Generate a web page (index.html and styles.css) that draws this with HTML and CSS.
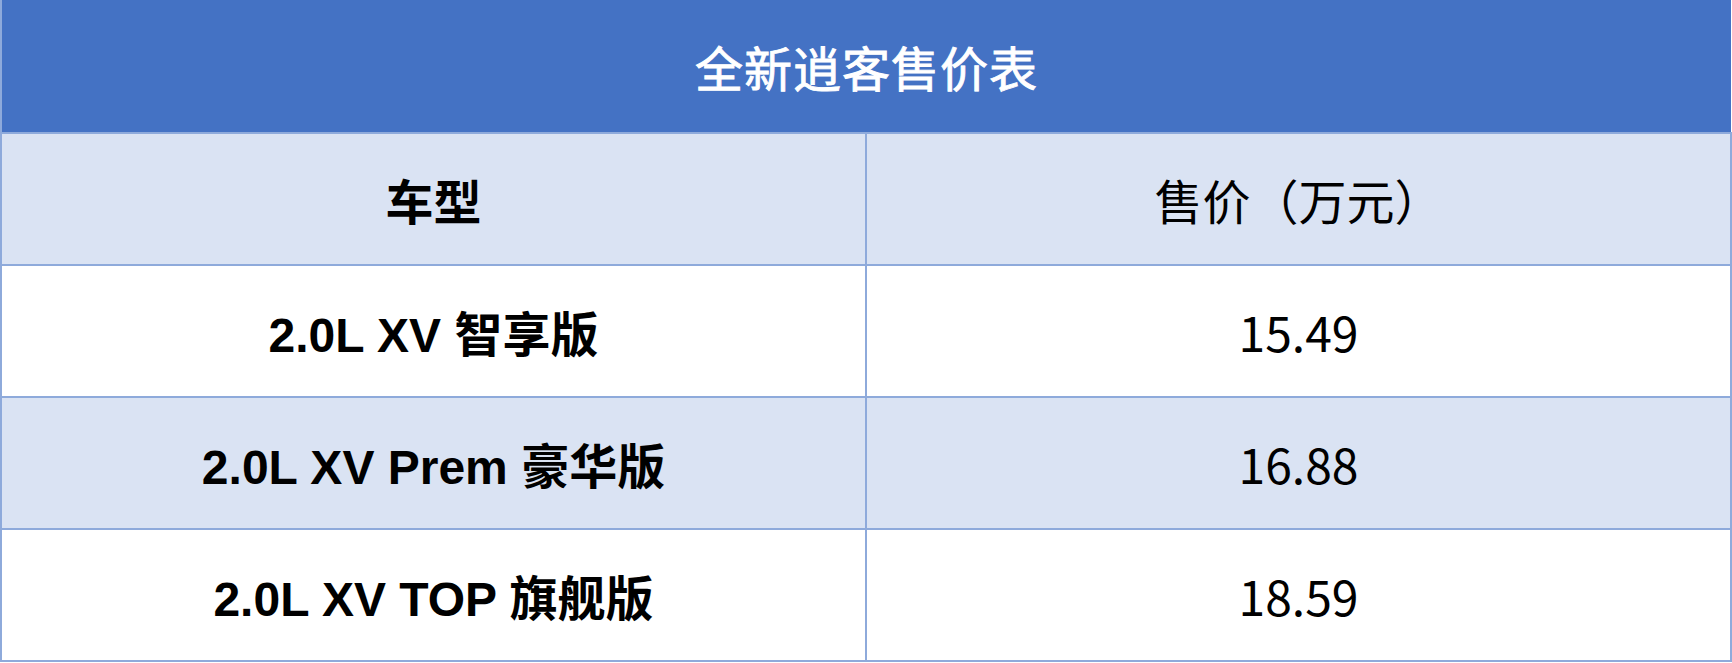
FILE: index.html
```html
<!DOCTYPE html>
<html lang="zh-CN">
<head>
<meta charset="utf-8">
<title>全新逍客售价表</title>
<link rel="stylesheet" href="styles.css">
</head>
<body>
<table class="price-table">
  <thead>
    <tr class="title-row"><th colspan="2" class="title">全新逍客售价表</th></tr>
    <tr class="col-head alt">
      <th class="model">车型</th>
      <th class="price head-price">售价（万元）</th>
    </tr>
  </thead>
  <tbody>
    <tr>
      <td class="model">2.0L XV 智享版</td>
      <td class="price">15.49</td>
    </tr>
    <tr class="alt">
      <td class="model">2.0L XV Prem 豪华版</td>
      <td class="price">16.88</td>
    </tr>
    <tr>
      <td class="model">2.0L XV TOP 旗舰版</td>
      <td class="price">18.59</td>
    </tr>
  </tbody>
</table>
</body>
</html>
```
FILE: styles.css
```css
html, body {
  margin: 0;
  padding: 0;
  background: #ffffff;
}

.price-table {
  width: 1732px;
  border-collapse: collapse;
  table-layout: fixed;
  font-family: "Liberation Sans", "Noto Sans CJK SC", sans-serif;
  color: #000000;
}

.price-table th,
.price-table td {
  border: 2px solid #8eaadb;
  padding: 0;
  text-align: center;
  vertical-align: middle;
  height: 130px;
}

.price-table .title {
  background: #4472c4;
  color: #ffffff;
  height: 132px;
  border-top: none;
  border-right: none;
  font-size: 48px;
  font-weight: normal;
  font-family: "Noto Sans CJK SC", sans-serif;
  letter-spacing: 1px;
  -webkit-text-stroke: 0.9px #ffffff;
}

.price-table .alt th,
.price-table .alt td {
  background: #dae3f3;
}

.price-table .model {
  width: 864px;
  font-size: 48px;
  font-weight: bold;
}

.price-table .col-head .model {
  font-family: "Noto Sans CJK SC", sans-serif;
}

.price-table .price {
  font-size: 48px;
  font-weight: normal;
  font-family: "Noto Sans CJK SC", sans-serif;
}
```
